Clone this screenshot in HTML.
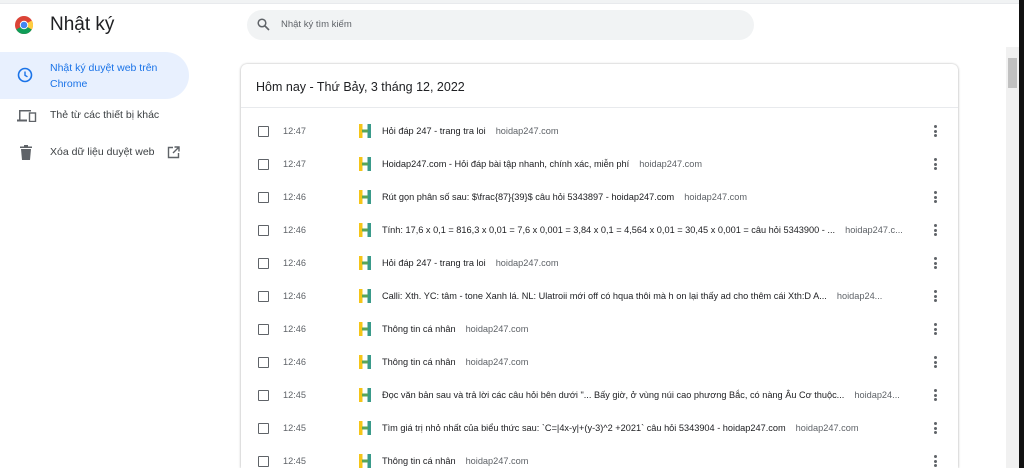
<!DOCTYPE html>
<html style="overflow:hidden;height:468px"><head><meta charset="utf-8"><style>
*{margin:0;padding:0;box-sizing:border-box}
body{width:1024px;height:468px;overflow:hidden;background:#fff;font-family:"Liberation Sans","Noto Sans CJK SC",sans-serif;position:relative;color:#202124}
.topline{position:absolute;left:0;top:0;width:1019px;height:4px;background:#f1f3f4;border-bottom:1px solid #e8eaed}
.blk{position:absolute;right:0;top:0;width:5px;height:468px;background:#111}
.sb{position:absolute;left:1006px;top:47px;width:13px;height:421px;background:#f1f1f1}
.thumb{position:absolute;left:1008px;top:58px;width:9px;height:30px;background:#c1c1c1}
.title{position:absolute;left:50px;top:14px;font-size:19px}
.logo{position:absolute;left:15px;top:16px}
.nav{position:absolute;left:0;width:189px;font-size:10.5px;color:#3c4043}
.sel{top:52px;height:47px;background:#e8f0fe;border-radius:0 24px 24px 0;color:#1a73e8}
.search{position:absolute;left:247px;top:10px;width:507px;height:30px;background:#f1f3f4;border-radius:15px;font-size:9.5px;color:#5f6368}
.card{position:absolute;left:241px;top:64px;width:717px;height:404px;border-radius:6px 6px 0 0;box-shadow:0 0 2px rgba(0,0,0,.25),0 1px 3px rgba(0,0,0,.12);background:#fff;overflow:hidden}
.hdr{height:44px;border-bottom:1px solid #e8eaed;font-size:12.5px;padding:16px 0 0 15px;color:#202124}
.row{position:absolute;left:0;height:1px;width:717px;font-size:9.2px;color:#202124}
.cb{position:absolute;left:17px;top:-5px;width:11px;height:11px;border:1.5px solid #5f6368;border-radius:1px}
.tm{position:absolute;left:42px;top:-5px;color:#5f6368}
.fv{position:absolute;left:118px;top:-7px}
.tt{position:absolute;left:141px;top:-5px;white-space:nowrap}
.dm{color:#5f6368;margin-left:10px}
.dots{position:absolute;left:693px;top:-6px;width:3px}
.dots i{display:block;width:3px;height:3px;background:#5f6368;border-radius:50%;margin-bottom:1.5px}
</style></head><body>
<div class="topline"></div>
<svg class="logo" width="18" height="18" viewBox="0 0 18 18"><circle cx="9" cy="9" r="9" fill="#db4437"/><path d="M9 9 L1.2 13.5 A9 9 0 0 0 9 18 A9 9 0 0 0 16.8 13.5Z" fill="#0f9d58"/><path d="M9 9 L16.8 13.5 A9 9 0 0 0 16.8 4.5Z" fill="#ffcd40"/><circle cx="9" cy="9" r="4.2" fill="#fff"/><circle cx="9" cy="9" r="3.3" fill="#4285f4"/></svg>
<div class="title">Nhật ký</div>
<div class="nav sel"><svg style="position:absolute;left:17px;top:15px" width="16" height="16" viewBox="0 0 16 16"><circle cx="8" cy="8" r="6.5" fill="none" stroke="#1a73e8" stroke-width="1.6"/><path d="M8 4.5V8.3L10.5 9.8" fill="none" stroke="#1a73e8" stroke-width="1.4"/></svg><div style="position:absolute;left:50px;top:8px;line-height:16px">Nhật ký duyệt web trên<br>Chrome</div></div>
<div class="nav" style="top:106px;height:20px"><svg style="position:absolute;left:17px;top:3px" width="20" height="13" viewBox="0 0 20 13"><path d="M2 1h12v1.5H3.5v8H2z M0 10.5h10v2H0z" fill="#5f6368"/><rect x="12.5" y="4" width="6" height="8.5" fill="none" stroke="#5f6368" stroke-width="1.4"/></svg><div style="position:absolute;left:50px;top:3px">Thẻ từ các thiết bị khác</div></div>
<div class="nav" style="top:143px;height:20px"><svg style="position:absolute;left:20px;top:2px" width="12" height="15" viewBox="0 0 12 15"><path d="M0 1.5h12v1.5H0z M4 0h4v1.5H4z M1 4h10l-1 11H2z" fill="#5f6368"/></svg><div style="position:absolute;left:50px;top:3px">Xóa dữ liệu duyệt web</div><svg style="position:absolute;left:167px;top:3px" width="13" height="13" viewBox="0 0 13 13"><path d="M6 1.5H1.5v10h10V7 M7.5 1h4.5v4.5 M12 1L6 7" fill="none" stroke="#5f6368" stroke-width="1.4"/></svg></div>
<div class="search"><svg style="position:absolute;left:10px;top:8px" width="13" height="13" viewBox="0 0 13 13"><circle cx="5" cy="5" r="3.8" fill="none" stroke="#5f6368" stroke-width="1.5"/><path d="M8 8l4 4" stroke="#5f6368" stroke-width="1.6"/></svg><span style="position:absolute;left:34px;top:9px">Nhật ký tìm kiếm</span></div>
<div class="card"><div class="hdr">Hôm nay - Thứ Bảy, 3 tháng 12, 2022</div>
<div id="rows"></div>
</div>
<div class="sb"></div><div class="thumb"></div>
<div class="blk"></div>
<script>
var d=[["12:47","Hỏi đáp 247 - trang tra loi","hoidap247.com"],["12:47","Hoidap247.com - Hỏi đáp bài tập nhanh, chính xác, miễn phí","hoidap247.com"],["12:46","Rút gọn phân số sau: $\\frac{87}{39}$ câu hỏi 5343897 - hoidap247.com","hoidap247.com"],["12:46","Tính: 17,6 x 0,1 = 816,3 x 0,01 = 7,6 x 0,001 = 3,84 x 0,1 = 4,564 x 0,01 = 30,45 x 0,001 = câu hỏi 5343900 - ...","hoidap247.c..."],["12:46","Hỏi đáp 247 - trang tra loi","hoidap247.com"],["12:46","Calli: Xth. YC: tâm - tone Xanh lá. NL: Ulatroii mới off có hqua thôi mà h on lại thấy ad cho thêm cái Xth:D A...","hoidap24..."],["12:46","Thông tin cá nhân","hoidap247.com"],["12:46","Thông tin cá nhân","hoidap247.com"],["12:45","Đọc văn bản sau và trả lời các câu hỏi bên dưới \"... Bấy giờ, ở vùng núi cao phương Bắc, có nàng Âu Cơ thuộc...","hoidap24..."],["12:45","Tìm giá trị nhỏ nhất của biểu thức sau: `C=|4x-y|+(y-3)^2 +2021` câu hỏi 5343904 - hoidap247.com","hoidap247.com"],["12:45","Thông tin cá nhân","hoidap247.com"]];
var h="";d.forEach(function(r,i){var y=67+i*33;h+='<div class="row" style="top:'+y+'px"><div class="cb"></div><div class="tm">'+r[0]+'</div><svg class="fv" width="12" height="14" viewBox="0 0 12 14"><rect x="0" y="0" width="3.5" height="14" fill="#f5c518"/><rect x="8.5" y="0" width="3.5" height="14" fill="#3a9a8a"/><rect x="3" y="5.5" width="6" height="3" fill="#5aa55a"/></svg><div class="tt">'+r[1]+'<span class="dm">'+r[2]+'</span></div><div class="dots"><i></i><i></i><i></i></div></div>'});
document.getElementById("rows").innerHTML=h;
</script>
</body></html>
